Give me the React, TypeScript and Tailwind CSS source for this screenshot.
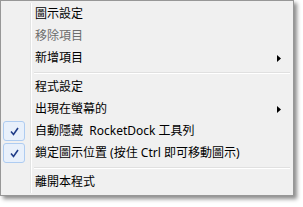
import type { ReactNode } from "react";

type Item =
  | { kind: "sep" }
  | { kind: "item"; label: ReactNode; disabled?: boolean; checked?: boolean; submenu?: boolean };

const items: Item[] = [
  { kind: "item", label: "圖示設定" },
  { kind: "item", label: "移除項目", disabled: true },
  { kind: "item", label: "新增項目", submenu: true },
  { kind: "sep" },
  { kind: "item", label: "程式設定" },
  { kind: "item", label: "出現在螢幕的", submenu: true },
  { kind: "item", label: "自動隱藏  RocketDock 工具列", checked: true },
  { kind: "item", label: "鎖定圖示位置 (按住 Ctrl 即可移動圖示)", checked: true },
  { kind: "sep" },
  { kind: "item", label: "離開本程式" },
];

function Gutter({ children }: { children?: ReactNode }) {
  return (
    <div className="flex h-full w-[28px] shrink-0 items-center border-r border-[#e2e3e3] shadow-[1px_0_0_#ffffff]">
      {children}
    </div>
  );
}

function CheckBox() {
  return (
    <div className="flex h-[20px] w-[22px] items-center justify-center rounded-[3px] border border-[#aeccf1] bg-[#e8f0fb]">
      <svg width="9" height="9" viewBox="0 0 9 9" fill="none">
        <path d="M1 4.5 L3.5 7.5 L8 1" stroke="#1f3c88" strokeWidth="1.6" />
      </svg>
    </div>
  );
}

function Row({ item }: { item: Extract<Item, { kind: "item" }> }) {
  return (
    <div className="flex h-[22px] items-center">
      <Gutter>{item.checked ? <CheckBox /> : null}</Gutter>
      <span
        className={`ml-[4px] flex-1 whitespace-pre ${item.disabled ? "text-[#6d6d6d]" : "text-black"}`}
      >
        {item.label}
      </span>
      {item.submenu ? (
        <svg width="4" height="7" viewBox="0 0 4 7" className="mr-[10px]">
          <path d="M0 0 L4 3.5 L0 7 Z" fill="#000" />
        </svg>
      ) : null}
    </div>
  );
}

function Separator() {
  return (
    <div className="flex h-[7px] items-center">
      <Gutter />
      <div className="ml-[3px] mr-[1px] h-px flex-1 bg-[#e0e0e0] shadow-[0_1px_0_#ffffff]" />
    </div>
  );
}

export default function App() {
  return (
    <div className="h-[207px] w-[303px] bg-white font-['Noto_Sans','Noto_Sans_CJK_TC',sans-serif] text-[12px] leading-none">
      <div className="w-[294px] border border-[#979797] bg-[#f0f0f0] p-[2px] shadow-[3px_3px_4px_rgba(0,0,0,0.45)]">
        {items.map((it, i) =>
          it.kind === "sep" ? <Separator key={i} /> : <Row key={i} item={it} />,
        )}
      </div>
    </div>
  );
}
